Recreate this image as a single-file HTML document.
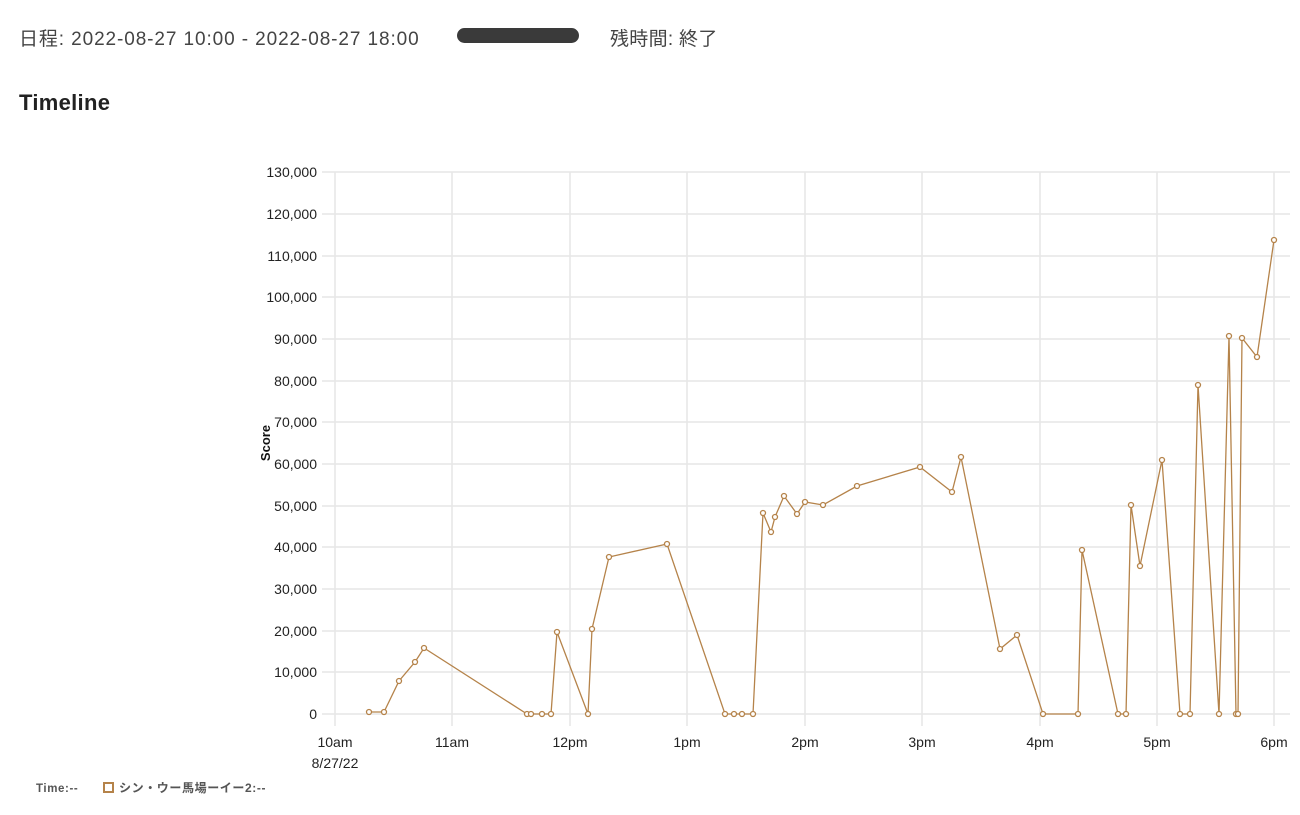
<!DOCTYPE html>
<html><head><meta charset="utf-8"><style>
body{margin:0;background:#fff;font-family:"Liberation Sans","Noto Sans CJK JP",sans-serif;color:#333;width:1300px;height:815px;overflow:hidden;position:relative}
.hdr{position:absolute;top:24px;left:19px;font-size:19px;letter-spacing:0.9px;color:#444;white-space:nowrap}
.pill{position:absolute;left:457px;top:28px;width:122px;height:15px;border-radius:8px;background:#3a3a3a}
.h2{position:absolute;left:19px;top:90px;font-size:22px;font-weight:bold;letter-spacing:0.3px;color:#222}
svg{position:absolute;left:0;top:0}
</style></head><body>
<div class="hdr">日程: 2022-08-27 10:00 - 2022-08-27 18:00</div>
<div class="pill"></div>
<div class="hdr" style="left:610px;letter-spacing:0.3px">残時間: 終了</div>
<div class="h2">Timeline</div>
<svg width="1300" height="815" font-family="Liberation Sans, Noto Sans CJK JP, sans-serif">
<g stroke="#e6e6e6" stroke-width="1.5">
<line x1="322" x2="1290" y1="714" y2="714"/><line x1="322" x2="1290" y1="672" y2="672"/><line x1="322" x2="1290" y1="631" y2="631"/><line x1="322" x2="1290" y1="589" y2="589"/><line x1="322" x2="1290" y1="547" y2="547"/><line x1="322" x2="1290" y1="506" y2="506"/><line x1="322" x2="1290" y1="464" y2="464"/><line x1="322" x2="1290" y1="422" y2="422"/><line x1="322" x2="1290" y1="381" y2="381"/><line x1="322" x2="1290" y1="339" y2="339"/><line x1="322" x2="1290" y1="297" y2="297"/><line x1="322" x2="1290" y1="256" y2="256"/><line x1="322" x2="1290" y1="214" y2="214"/><line x1="322" x2="1290" y1="172" y2="172"/>
<line x1="335" x2="335" y1="172" y2="726"/><line x1="452" x2="452" y1="172" y2="726"/><line x1="570" x2="570" y1="172" y2="726"/><line x1="687" x2="687" y1="172" y2="726"/><line x1="805" x2="805" y1="172" y2="726"/><line x1="922" x2="922" y1="172" y2="726"/><line x1="1040" x2="1040" y1="172" y2="726"/><line x1="1157" x2="1157" y1="172" y2="726"/><line x1="1274" x2="1274" y1="172" y2="726"/>
</g>
<g font-size="14" fill="#222" text-anchor="end">
<text x="317" y="719">0</text><text x="317" y="677">10,000</text><text x="317" y="636">20,000</text><text x="317" y="594">30,000</text><text x="317" y="552">40,000</text><text x="317" y="511">50,000</text><text x="317" y="469">60,000</text><text x="317" y="427">70,000</text><text x="317" y="386">80,000</text><text x="317" y="344">90,000</text><text x="317" y="302">100,000</text><text x="317" y="261">110,000</text><text x="317" y="219">120,000</text><text x="317" y="177">130,000</text>
</g>
<g font-size="14" fill="#222" text-anchor="middle">
<text x="335" y="747">10am</text><text x="335" y="768">8/27/22</text><text x="452" y="747">11am</text><text x="570" y="747">12pm</text><text x="687" y="747">1pm</text><text x="805" y="747">2pm</text><text x="922" y="747">3pm</text><text x="1040" y="747">4pm</text><text x="1157" y="747">5pm</text><text x="1274" y="747">6pm</text>
</g>
<text x="270" y="443" font-size="13" font-weight="bold" fill="#111" text-anchor="middle" transform="rotate(-90 270 443)">Score</text>
<polyline fill="none" stroke="#b5834a" stroke-width="1.3" points="369,712 384,712 399,681 415,662 424,648 527,714 531,714 542,714 551,714 557,632 588,714 592,629 609,557 667,544 725,714 734,714 742,714 753,714 763,513 771,532 775,517 784,496 797,514 805,502 823,505 857,486 920,467 952,492 961,457 1000,649 1017,635 1043,714 1078,714 1082,550 1118,714 1126,714 1131,505 1140,566 1162,460 1180,714 1190,714 1198,385 1219,714 1229,336 1236,714 1238,714 1242,338 1257,357 1274,240"/>
<g fill="#fff" stroke="#b5834a" stroke-width="1.3">
<circle cx="369" cy="712" r="2.5"/><circle cx="384" cy="712" r="2.5"/><circle cx="399" cy="681" r="2.5"/><circle cx="415" cy="662" r="2.5"/><circle cx="424" cy="648" r="2.5"/><circle cx="527" cy="714" r="2.5"/><circle cx="531" cy="714" r="2.5"/><circle cx="542" cy="714" r="2.5"/><circle cx="551" cy="714" r="2.5"/><circle cx="557" cy="632" r="2.5"/><circle cx="588" cy="714" r="2.5"/><circle cx="592" cy="629" r="2.5"/><circle cx="609" cy="557" r="2.5"/><circle cx="667" cy="544" r="2.5"/><circle cx="725" cy="714" r="2.5"/><circle cx="734" cy="714" r="2.5"/><circle cx="742" cy="714" r="2.5"/><circle cx="753" cy="714" r="2.5"/><circle cx="763" cy="513" r="2.5"/><circle cx="771" cy="532" r="2.5"/><circle cx="775" cy="517" r="2.5"/><circle cx="784" cy="496" r="2.5"/><circle cx="797" cy="514" r="2.5"/><circle cx="805" cy="502" r="2.5"/><circle cx="823" cy="505" r="2.5"/><circle cx="857" cy="486" r="2.5"/><circle cx="920" cy="467" r="2.5"/><circle cx="952" cy="492" r="2.5"/><circle cx="961" cy="457" r="2.5"/><circle cx="1000" cy="649" r="2.5"/><circle cx="1017" cy="635" r="2.5"/><circle cx="1043" cy="714" r="2.5"/><circle cx="1078" cy="714" r="2.5"/><circle cx="1082" cy="550" r="2.5"/><circle cx="1118" cy="714" r="2.5"/><circle cx="1126" cy="714" r="2.5"/><circle cx="1131" cy="505" r="2.5"/><circle cx="1140" cy="566" r="2.5"/><circle cx="1162" cy="460" r="2.5"/><circle cx="1180" cy="714" r="2.5"/><circle cx="1190" cy="714" r="2.5"/><circle cx="1198" cy="385" r="2.5"/><circle cx="1219" cy="714" r="2.5"/><circle cx="1229" cy="336" r="2.5"/><circle cx="1236" cy="714" r="2.5"/><circle cx="1238" cy="714" r="2.5"/><circle cx="1242" cy="338" r="2.5"/><circle cx="1257" cy="357" r="2.5"/><circle cx="1274" cy="240" r="2.5"/>
</g>
<text x="36" y="792" font-size="11.5" font-weight="bold" fill="#555" letter-spacing="0.6">Time:--</text>
<rect x="104" y="783" width="9" height="9" fill="none" stroke="#b5834a" stroke-width="2"/>
<text x="119" y="792" font-size="12" font-weight="bold" fill="#555" letter-spacing="0.6">シン・ウー馬場ーイー2:--</text>
</svg>
</body></html>
